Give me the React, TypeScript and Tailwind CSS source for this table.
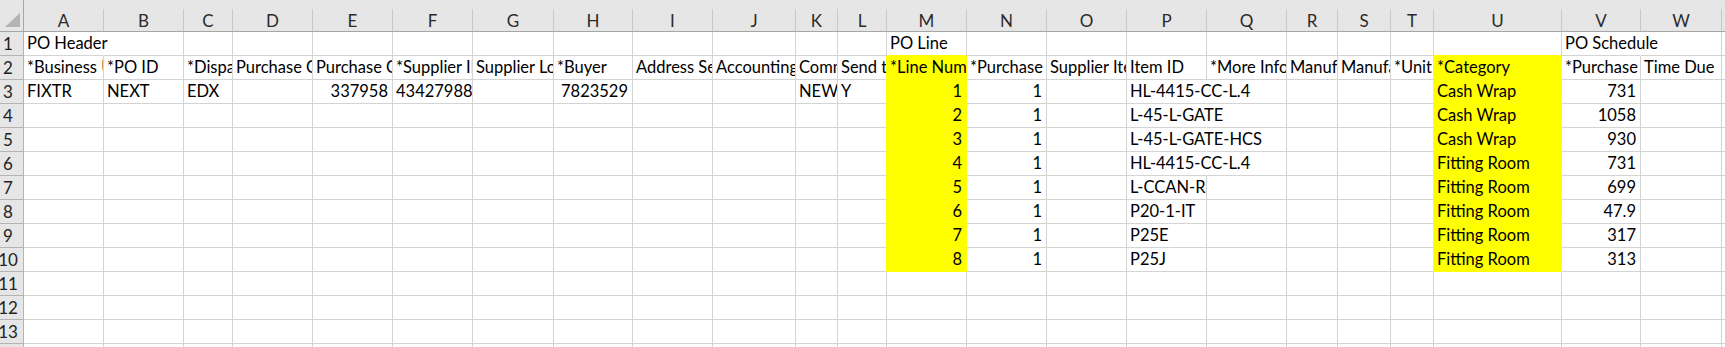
import React from 'react';

type Cell = { v: string; num?: boolean; spill?: boolean };

const columns = ['A', 'B', 'C', 'D', 'E', 'F', 'G', 'H', 'I', 'J', 'K', 'L', 'M', 'N', 'O', 'P', 'Q', 'R', 'S', 'T', 'U', 'V', 'W', 'X'];

const gridCols =
  'grid grid-cols-[24px_80px_80px_49px_80px_80px_80px_81px_79px_80px_83px_42px_49px_80px_80px_80px_80px_80px_51px_53px_43px_128px_79px_81px_80px]';

// rows keyed by column letter
const rows: Record<string, Cell>[] = [
  { A: { v: 'PO Header', spill: true }, M: { v: 'PO Line' }, V: { v: 'PO Schedule', spill: true } },
  {
    A: { v: '*Business Unit' },
    B: { v: '*PO ID' },
    C: { v: '*Dispatch Method' },
    D: { v: 'Purchase Order Date' },
    E: { v: 'Purchase Order Reference' },
    F: { v: '*Supplier ID' },
    G: { v: 'Supplier Location' },
    H: { v: '*Buyer' },
    I: { v: 'Address Sequence' },
    J: { v: 'Accounting Date' },
    K: { v: 'Comments' },
    L: { v: 'Send to Supplier' },
    M: { v: '*Line Number' },
    N: { v: '*Purchase Qty' },
    O: { v: 'Supplier Item ID' },
    P: { v: 'Item ID' },
    Q: { v: '*More Info' },
    R: { v: 'Manufacturer' },
    S: { v: 'Manufacturer Item' },
    T: { v: '*Unit of Measure' },
    U: { v: '*Category' },
    V: { v: '*Purchase Price' },
    W: { v: 'Time Due' },
  },
  {
    A: { v: 'FIXTR' },
    B: { v: 'NEXT' },
    C: { v: 'EDX' },
    E: { v: '337958', num: true },
    F: { v: '43427988' },
    H: { v: '7823529', num: true },
    K: { v: 'NEW' },
    L: { v: 'Y' },
  },
];

const lines = [
  ['HL-4415-CC-L.4', 'Cash Wrap', '731'],
  ['L-45-L-GATE', 'Cash Wrap', '1058'],
  ['L-45-L-GATE-HCS', 'Cash Wrap', '930'],
  ['HL-4415-CC-L.4', 'Fitting Room', '731'],
  ['L-CCAN-R', 'Fitting Room', '699'],
  ['P20-1-IT', 'Fitting Room', '47.9'],
  ['P25E', 'Fitting Room', '317'],
  ['P25J', 'Fitting Room', '313'],
];

lines.forEach((line, i) => {
  const row = rows[i + 2] || {};
  row.M = { v: String(i + 1), num: true };
  row.N = { v: '1', num: true };
  row.P = { v: line[0], spill: line[0].length > 9 };
  row.U = { v: line[1] };
  row.V = { v: line[2], num: true };
  rows[i + 2] = row;
});

while (rows.length < 14) rows.push({});

const isYellow = (r: number, c: string) => (c === 'M' || c === 'U') && r >= 1 && r <= 9;

export default function App() {
  return (
    <div className="w-[1725px] h-[347px] overflow-hidden bg-white font-['Lato','Open_Sans',sans-serif] text-[16.5px] text-black">
      {/* column letters */}
      <div className={`${gridCols} h-[32px] bg-[#e6e6e6] border-b border-[#a6a6a6]`}>
        <div className="relative border-r border-[#a6a6a6]">
          <svg className="absolute left-[5px] top-[13px]" width="15" height="14" viewBox="0 0 15 14">
            <polygon points="15,0 15,14 0,14" fill="#b4b4b4" />
          </svg>
        </div>
        {columns.map((c) => (
          <div key={c} className="pt-[9px] h-full">
            <div className="h-full border-r border-[#c8c8c8] flex items-center justify-center text-[#2b2b2b] text-[17px] leading-none">
              {c}
            </div>
          </div>
        ))}
      </div>

      {rows.map((row, r) => (
        <div key={r} className={gridCols}>
          <div className="h-[24px] bg-[#e6e6e6] border-r border-b border-[#b4b4b4] flex justify-center pr-[7px] leading-[23px] text-[#222] text-[17px]">
            {r + 1}
          </div>
          {columns.map((c, ci) => {
            const cell = row[c];
            const yellow = isYellow(r, c);
            const next = columns[ci + 1];
            const rightYellow = yellow || (next ? isYellow(r, next) : false);
            const bottomYellow = yellow || isYellow(r + 1, c);
            const over = !!cell?.spill;
            return (
              <div
                key={c}
                className={[
                  'h-[24px] border-r border-b whitespace-nowrap leading-[23px]',
                  over ? 'overflow-visible relative z-10 border-r-white' : 'overflow-hidden',
                  !over && (rightYellow ? 'border-r-[#ffff00]' : 'border-r-[#d4d4d4]'),
                  bottomYellow ? 'border-b-[#ffff00]' : 'border-b-[#d4d4d4]',
                  yellow ? 'bg-[#ffff00]' : '',
                  cell?.num ? 'text-right pr-[4px]' : 'pl-[3px]',
                ]
                  .filter(Boolean)
                  .join(' ')}
              >
                {cell?.v}
              </div>
            );
          })}
        </div>
      ))}
    </div>
  );
}
